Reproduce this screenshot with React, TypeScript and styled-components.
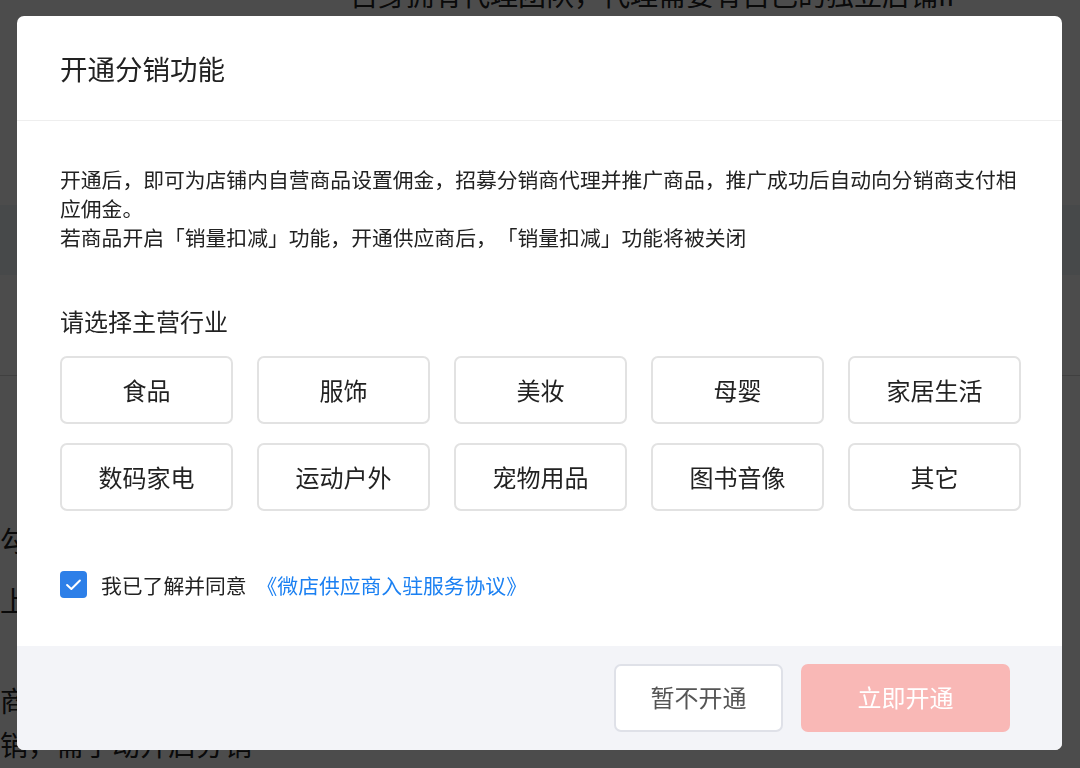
import React, { useState } from "react";
import styled, { createGlobalStyle } from "styled-components";

const GlobalStyle = createGlobalStyle`
  html, body {
    margin: 0;
    padding: 0;
    width: 1080px;
    height: 768px;
    overflow: hidden;
    background: #ffffff;
    font-family: "Noto Sans CJK SC", "Noto Sans", "Liberation Sans", sans-serif;
    text-spacing-trim: space-all;
  }
  * { box-sizing: border-box; }
`;

/* ---------- background page (behind the mask) ---------- */
const BgPage = styled.div`
  width: 1080px;
  height: 768px;
  overflow: hidden;
  display: flex;
  flex-direction: column;
  color: #222;
  font-size: 28px;
`;

const BgLine = styled.div<{ $indent: number; $top: number }>`
  margin-top: ${(p) => p.$top}px;
  padding-left: ${(p) => p.$indent}px;
  line-height: 40px;
  white-space: nowrap;
`;

const BgBand = styled.div<{ $top: number }>`
  margin-top: ${(p) => p.$top}px;
  height: 70px;
  background: #eef3f8;
  flex-shrink: 0;
`;

const BgRule = styled.div<{ $top: number }>`
  margin-top: ${(p) => p.$top}px;
  height: 1px;
  background: #d8d8d8;
  flex-shrink: 0;
`;

/* ---------- mask + modal ---------- */
const Mask = styled.div`
  position: fixed;
  inset: 0;
  background: rgba(0, 0, 0, 0.7);
  display: flex;
  align-items: flex-start;
  padding: 16px 0 0 17px;
`;

const Modal = styled.div`
  width: 1045px;
  height: 734px;
  background: #fff;
  border-radius: 7px;
  overflow: hidden;
  display: flex;
  flex-direction: column;
`;

const Header = styled.div`
  height: 105px;
  flex-shrink: 0;
  display: flex;
  align-items: center;
  padding: 0 43px;
  border-bottom: 1px solid #eeeeee;
`;

const Title = styled.h2`
  margin: 0;
  font-size: 27.5px;
  font-weight: 400;
  color: #222;
`;

const Body = styled.div`
  flex: 1;
  padding: 44px 42px 0 43px;
  display: flex;
  flex-direction: column;
`;

const Desc = styled.p`
  margin: 0;
  font-size: 20.8px;
  line-height: 29px;
  color: #222;
  white-space: nowrap;
`;

const SectionTitle = styled.h3`
  margin: 52px 0 0;
  font-size: 24px;
  line-height: 34px;
  font-weight: 400;
  color: #222;
`;

const Grid = styled.div`
  margin-top: 18px;
  display: grid;
  grid-template-columns: repeat(5, 173px);
  grid-auto-rows: 68px;
  column-gap: 24px;
  row-gap: 19px;
`;

const Option = styled.button<{ $active: boolean }>`
  border: 2px solid ${(p) => (p.$active ? "#f56c6c" : "#e2e2e2")};
  border-radius: 7px;
  background: #fff;
  font-family: inherit;
  font-size: 24px;
  color: #222;
  display: flex;
  align-items: center;
  justify-content: center;
  padding: 0 0 2px;
  cursor: pointer;
`;

const AgreeRow = styled.label`
  margin-top: 60px;
  display: flex;
  align-items: center;
  height: 27px;
  font-size: 20.8px;
  color: #222;
  cursor: pointer;
`;

const Check = styled.span<{ $checked: boolean }>`
  width: 27px;
  height: 27px;
  border-radius: 4px;
  background: ${(p) => (p.$checked ? "#2d7fe8" : "#fff")};
  border: ${(p) => (p.$checked ? "none" : "2px solid #ccc")};
  display: flex;
  align-items: center;
  justify-content: center;
  flex-shrink: 0;
`;

const AgreeText = styled.span`
  margin-left: 14px;
`;

const Link = styled.a`
  margin-left: 10px;
  color: #1b80f2;
  text-decoration: none;
`;

const Footer = styled.div`
  height: 104px;
  flex-shrink: 0;
  background: #f3f4f8;
  display: flex;
  align-items: center;
  justify-content: flex-end;
  gap: 18px;
  padding-right: 52px;
`;

const Btn = styled.button<{ $primary?: boolean }>`
  height: 68px;
  width: ${(p) => (p.$primary ? 209 : 169)}px;
  border-radius: 7px;
  font-family: inherit;
  font-size: 24px;
  padding: 0 0 4px;
  cursor: pointer;
  border: ${(p) => (p.$primary ? "none" : "2px solid #dfe1e8")};
  background: ${(p) => (p.$primary ? "#f9b8b6" : "#fff")};
  color: ${(p) => (p.$primary ? "#fff" : "#555")};
`;

const industries = [
  "食品",
  "服饰",
  "美妆",
  "母婴",
  "家居生活",
  "数码家电",
  "运动户外",
  "宠物用品",
  "图书音像",
  "其它",
];

export default function App() {
  const [selected, setSelected] = useState<string | null>(null);
  const [agreed, setAgreed] = useState(true);

  return (
    <>
      <GlobalStyle />
      <BgPage>
        <BgLine $indent={350} $top={-26}>
          自身拥有代理团队，代理需要有自己的独立店铺IP
        </BgLine>
        <BgBand $top={191} />
        <BgRule $top={100} />
        <BgLine $indent={0} $top={144}>
          勾选后商品自动参与分销
        </BgLine>
        <BgLine $indent={0} $top={20}>
          上架
        </BgLine>
        <BgLine $indent={0} $top={60}>
          商品
        </BgLine>
        <BgLine $indent={-11} $top={4}>
          销，需手动开启分销
        </BgLine>
      </BgPage>
      <Mask>
        <Modal>
          <Header>
            <Title>开通分销功能</Title>
          </Header>
          <Body>
            <Desc>
              开通后，即可为店铺内自营商品设置佣金，招募分销商代理并推广商品，推广成功后自动向分销商支付相
              <br />
              应佣金。
              <br />
              若商品开启「销量扣减」功能，开通供应商后，「销量扣减」功能将被关闭
            </Desc>
            <SectionTitle>请选择主营行业</SectionTitle>
            <Grid>
              {industries.map((name) => (
                <Option
                  key={name}
                  $active={selected === name}
                  onClick={() => setSelected(name)}
                >
                  {name}
                </Option>
              ))}
            </Grid>
            <AgreeRow onClick={() => setAgreed((v) => !v)}>
              <Check $checked={agreed}>
                {agreed && (
                  <svg width="19" height="19" viewBox="0 0 16 16" fill="none">
                    <path
                      d="M2.6 8.4 L6.2 11.8 L13.4 4.6"
                      stroke="#fff"
                      strokeWidth="1.7"
                      strokeLinecap="round"
                      strokeLinejoin="round"
                    />
                  </svg>
                )}
              </Check>
              <AgreeText>我已了解并同意</AgreeText>
              <Link href="#" onClick={(e) => e.preventDefault()}>
                《微店供应商入驻服务协议》
              </Link>
            </AgreeRow>
          </Body>
          <Footer>
            <Btn>暂不开通</Btn>
            <Btn $primary>立即开通</Btn>
          </Footer>
        </Modal>
      </Mask>
    </>
  );
}
